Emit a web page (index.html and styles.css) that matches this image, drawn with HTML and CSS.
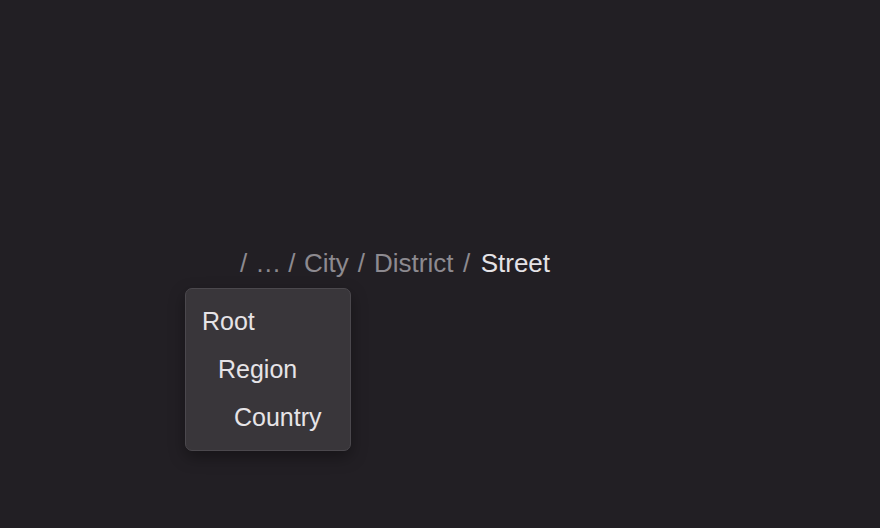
FILE: index.html
```html
<!DOCTYPE html>
<html>
<head>
<meta charset="utf-8">
<link rel="stylesheet" href="styles.css">
</head>
<body>
<div class="stage">
  <nav class="crumbs">
    <span class="sep">/</span>
    <span class="crumb more">…</span>
    <span class="sep">/</span>
    <span class="crumb">City</span>
    <span class="sep">/</span>
    <span class="crumb">District</span>
    <span class="sep">/</span>
    <span class="crumb current">Street</span>
    <div class="menu">
      <div class="item l0">Root</div>
      <div class="item l1">Region</div>
      <div class="item l2">Country</div>
    </div>
  </nav>
</div>
</body>
</html>
```
FILE: styles.css
```css
html, body {
  margin: 0;
  padding: 0;
  background: #221f24;
  width: 880px;
  height: 528px;
  overflow: hidden;
  font-family: "Liberation Sans", Arial, sans-serif;
}
.stage {
  padding-top: 245px;
  padding-left: 240px;
}
.crumbs {
  position: relative;
  display: flex;
  align-items: center;
  font-size: 26px;
  line-height: 36px;
  color: #8d8a90;
}
.crumbs > :nth-child(2) { margin-left: 8px; }
.crumbs > :nth-child(3) { margin-left: 7px; }
.crumbs > :nth-child(4) { margin-left: 8.5px; }
.crumbs > :nth-child(5) { margin-left: 9px; }
.crumbs > :nth-child(6) { margin-left: 9px; }
.crumbs > :nth-child(7) { margin-left: 9.5px; }
.crumbs > :nth-child(8) { margin-left: 10.5px; }
.sep { color: #8d8a90; }
.crumb.current { color: #e4e2e6; }
.menu {
  position: absolute;
  left: -55px;
  top: 43px;
  width: 164px;
  padding: 8px 0 9px;
  background: #39363a;
  border: 1px solid #4b484d;
  border-radius: 7px;
  box-shadow: 0 6px 16px rgba(0,0,0,0.35);
  font-size: 25px;
  color: #e6e4e7;
}
.item {
  height: 48px;
  line-height: 48px;
  padding-left: 16px;
}
.item.l1 { padding-left: 32px; }
.item.l2 { padding-left: 48px; }
```
